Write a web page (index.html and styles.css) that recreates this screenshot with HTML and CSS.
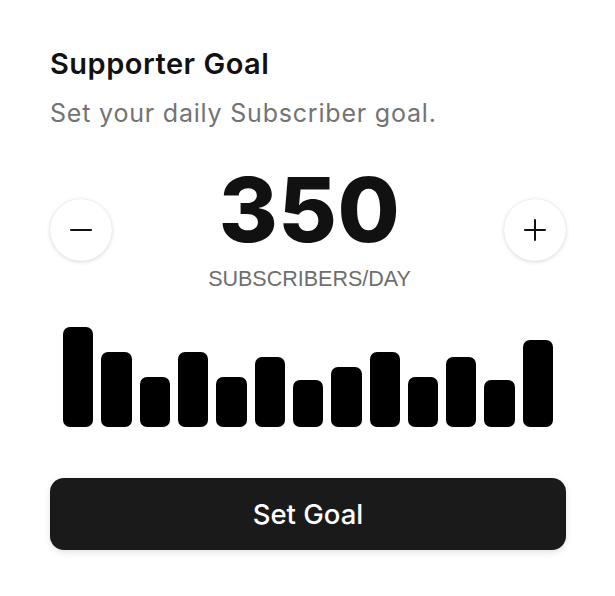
FILE: index.html
```html
<html>
<head>
<meta charset="utf-8">
<title>Supporter Goal</title>
<link rel="stylesheet" href="styles.css">
</head>
<body>
<div class="card">
    <h1 class="title">Supporter Goal</h1>
    <p class="subtitle">Set your daily Subscriber goal.</p>

    <div class="counter">
        <button class="round" aria-label="Decrease">
            <svg width="22" height="22" viewBox="0 0 22 22"><path d="M1 11h20" stroke="#111" stroke-width="2" stroke-linecap="round"/></svg>
        </button>
        <div class="value">
            <div class="number">350</div>
            <div class="unit">SUBSCRIBERS/DAY</div>
        </div>
        <button class="round" aria-label="Increase">
            <svg width="22" height="22" viewBox="0 0 22 22"><path d="M1 11h20M11 1v20" stroke="#111" stroke-width="2" stroke-linecap="round"/></svg>
        </button>
    </div>

    <div class="chart">
        <div class="bar" style="height: 100px"></div>
        <div class="bar" style="height: 75px"></div>
        <div class="bar" style="height: 50px"></div>
        <div class="bar" style="height: 75px"></div>
        <div class="bar" style="height: 50px"></div>
        <div class="bar" style="height: 70px"></div>
        <div class="bar" style="height: 47px"></div>
        <div class="bar" style="height: 60px"></div>
        <div class="bar" style="height: 75px"></div>
        <div class="bar" style="height: 50px"></div>
        <div class="bar" style="height: 70px"></div>
        <div class="bar" style="height: 47px"></div>
        <div class="bar" style="height: 87px"></div>
    </div>

    <button class="submit">Set Goal</button>
</div>
</body>
</html>
```

FILE: styles.css
```css
body {
    margin: 0;
    background: white;
    color: #111;
    font-family: Inter, "Liberation Sans", sans-serif;
}

.card {
    padding: 48px 49px 40px 50px;
}

.title {
    margin: 0;
    font-size: 29px;
    line-height: 32px;
    font-weight: 600;
    letter-spacing: 0.5px;
}

.subtitle {
    margin: 18px 0 0;
    font-size: 25px;
    line-height: 30px;
    letter-spacing: 0.8px;
    color: #737373;
}

.counter {
    display: flex;
    align-items: center;
    justify-content: space-between;
    margin-top: 37px;
}

.round {
    width: 62px;
    height: 62px;
    border: none;
    border-radius: 50%;
    background: white;
    box-shadow: 0 1px 4px rgba(0, 0, 0, 0.14), 0 0 1px rgba(0, 0, 0, 0.12);
    display: flex;
    align-items: center;
    justify-content: center;
    padding: 0;
}

.value {
    text-align: center;
    padding-left: 3px;
}

.number {
    font-size: 90px;
    line-height: 90px;
    font-weight: 800;
    letter-spacing: 0.5px;
}

.unit {
    margin-top: 8px;
    font-family: "Liberation Sans", sans-serif;
    font-size: 21.5px;
    line-height: 32px;
    color: #6e6e6e;
}

.chart {
    display: flex;
    align-items: flex-end;
    gap: 8px;
    height: 100px;
    margin-top: 32px;
    padding: 0 13px;
}

.bar {
    flex: 1;
    background: black;
    border-radius: 7px;
}

.submit {
    display: block;
    width: 100%;
    height: 72px;
    margin-top: 51px;
    border: none;
    border-radius: 14px;
    background: #1a1a1a;
    color: white;
    font-family: inherit;
    font-size: 27.5px;
    font-weight: 500;
    box-shadow: 0 2px 6px rgba(0, 0, 0, 0.12);
}
```
